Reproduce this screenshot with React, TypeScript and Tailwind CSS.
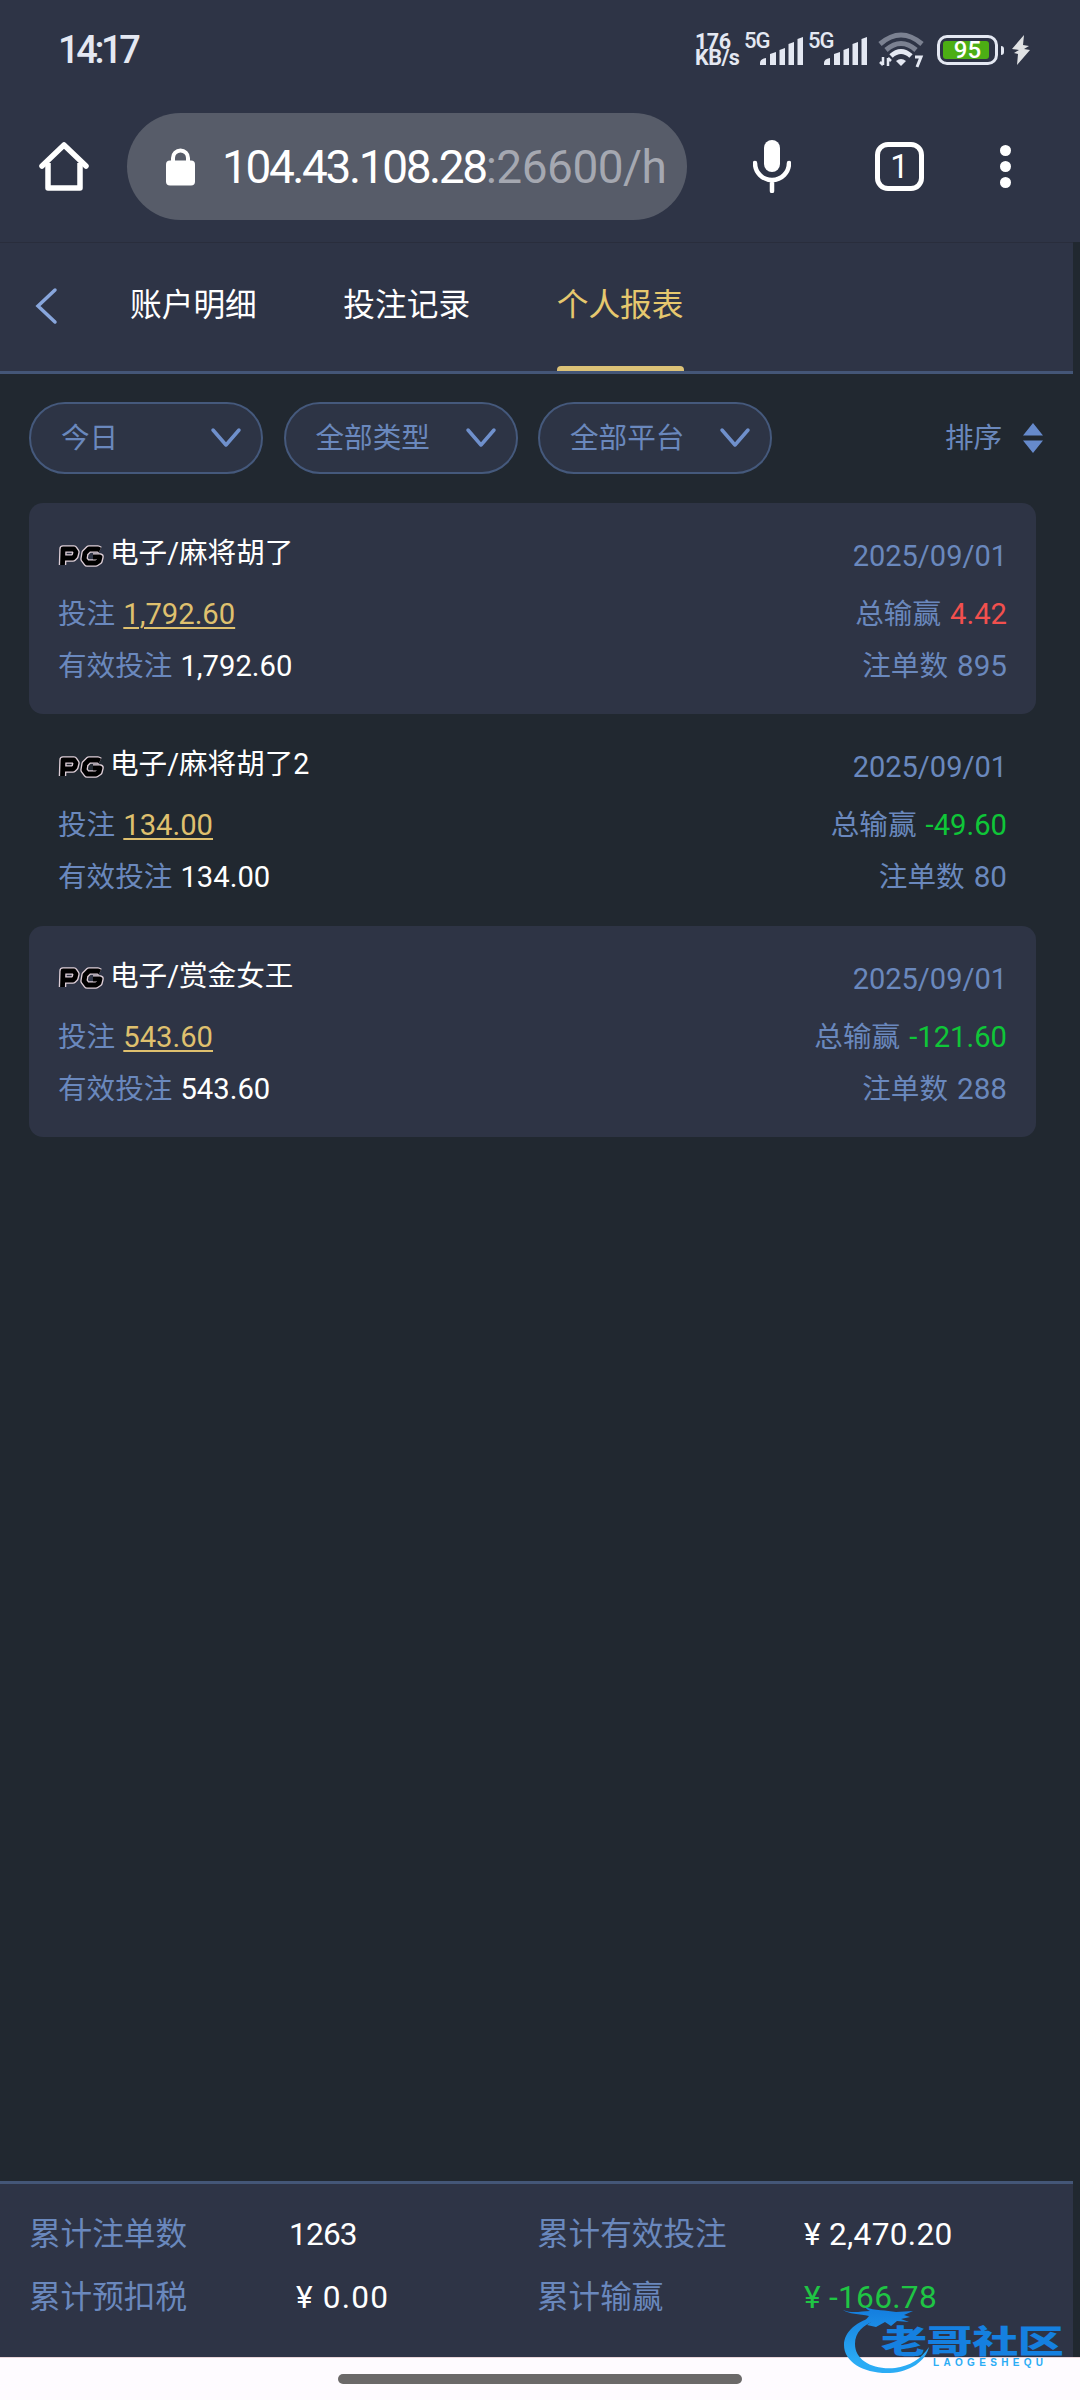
import clsx from "clsx";

const TABS = ["账户明细", "投注记录", "个人报表"];
const FILTERS = ["今日", "全部类型", "全部平台"];

const RECORDS = [
  { game: "电子/麻将胡了", bet: "1,792.60", valid: "1,792.60", win: "4.42", count: "895", date: "2025/09/01" },
  { game: "电子/麻将胡了2", bet: "134.00", valid: "134.00", win: "-49.60", count: "80", date: "2025/09/01" },
  { game: "电子/赏金女王", bet: "543.60", valid: "543.60", win: "-121.60", count: "288", date: "2025/09/01" },
];

const Signal = () => (
  <div className="relative h-[33px] w-[64px]">
    <span className="absolute -top-[4px] -left-[2px] text-[22px] leading-[22px] font-medium tracking-[-1px]">5G</span>
    <svg className="absolute left-[14px] top-[3px]" width="44" height="28" viewBox="0 0 44 28" fill="#e4e8f2">
      <path d="M0 28v-2q0-4 6-5v7zM10 28V17l6-2v13zM19.500 28V13l5.500-2v17zM28.500 28V7l5.500-2v23zM37.500 28V2l5.500-2v28z" />
    </svg>
  </div>
);

const StatusBar = () => (
  <div className="flex h-[100px] items-center pl-[58px] pr-[50px] text-[#e4e8f2]">
    <span className="text-[38px] font-medium tracking-[-3.400px]">14:17</span>
    <div className="ml-auto flex items-center">
      <div className="mr-[2px] w-[49px] text-[21.500px] leading-[16.500px] font-bold tracking-[-0.500px]">
        <div>176</div>
        <div>KB/s</div>
      </div>
      <Signal />
      <Signal />
      <svg className="ml-[4px]" width="46" height="36" viewBox="0 0 46 36" fill="none">
        <path d="M2 12Q23-6 44 12" stroke="#7b8191" strokeWidth="5" />
        <path d="M8 18Q23 5 38 18" stroke="#7b8191" strokeWidth="5" />
        <path d="M13 24Q23 15 33 24" stroke="#e4e8f2" strokeWidth="5" />
        <path d="M18 29q5-4 10 0l-5 5z" fill="#e4e8f2" />
        <path d="M5 25v8M5 33l-3-3M10 34v-8M10 26l3 3" stroke="#e4e8f2" strokeWidth="2.500" />
        <path d="M37 25h6l-4 10" stroke="#e4e8f2" strokeWidth="3" />
      </svg>
      <div className="ml-[13px] flex h-[30px] w-[61px] items-center rounded-[10px] border-[3px] border-[#e4e8f2] p-[3px]">
        <div className="flex h-full w-[46px] items-center justify-center rounded-[3px] bg-[#4cae14] pl-[3px] text-[24px] leading-none font-medium text-white">
          95
        </div>
      </div>
      <div className="ml-[3px] h-[9px] w-[3px] rounded-r-sm bg-[#e4e8f2]" />
      <svg className="ml-[8px]" width="18" height="30" viewBox="0 0 18 30" fill="#e0e2e4">
        <path d="M12 0 0 14l7 1-5 3 4 1-1 11L18 15l-6-1 5-3-6-1z" />
      </svg>
    </div>
  </div>
);

const BrowserBar = () => (
  <div className="flex h-[142px] items-start text-white">
    <svg className="ml-[39px] mt-[41px]" width="50" height="51" viewBox="0 0 50 51" fill="none" stroke="white" strokeWidth="5.500">
      <path d="M3 25 25 4l22 21" strokeLinecap="round" strokeLinejoin="round" />
      <path d="M9 22v25h32V22" strokeLinejoin="round" />
    </svg>
    <div className="ml-[38px] mt-[13px] flex h-[107px] w-[560px] items-center rounded-full bg-[#575c69] pl-[39px]">
      <svg width="29" height="38" viewBox="0 0 29 38">
        <path d="M7 15V10a7.500 7.500 0 0 1 15 0v5" fill="none" stroke="white" strokeWidth="4" />
        <rect y="12.500" width="29" height="25" rx="4" fill="white" />
      </svg>
      <div className="ml-[27px] whitespace-nowrap text-[46px] leading-none">
        <span className="tracking-[-2.400px]">104.43.108.28</span>
        <span className="tracking-[-0.500px] text-[#a5a8b1]">:26600/h</span>
      </div>
    </div>
    <svg className="ml-[66px] mt-[40px]" width="38" height="53" viewBox="0 0 38 53">
      <rect x="11" width="16" height="32" rx="8" fill="white" />
      <path d="M2 23c0 9 7 17 17 17s17-8 17-17M19 40v11" fill="none" stroke="white" strokeWidth="4.500" strokeLinecap="round" />
    </svg>
    <div className="ml-[84px] mt-[42px] flex size-[49px] items-center justify-center rounded-[13px] border-[5px] border-white text-[33px] leading-none">
      1
    </div>
    <div className="ml-[76px] mt-[45px] flex flex-col gap-[5px]">
      <span className="size-[11px] rounded-full bg-white" />
      <span className="size-[11px] rounded-full bg-white" />
      <span className="size-[11px] rounded-full bg-white" />
    </div>
  </div>
);

const PgLogo = () => (
  <svg className="mt-[2px]" width="47" height="25" viewBox="0 0 47 25" fill="none" strokeLinejoin="round">
    <g stroke="#dccdd6" strokeWidth="7.500">
      <path d="M4.500 21 5 5h11l2 3-1 4-2 2H7" />
      <path d="M42 6 40 5H31l-4 4-1 6 3 4h9l3-2 1-4h-7" />
    </g>
    <g stroke="#000" strokeWidth="4.800">
      <path d="M4.500 21 5 5h11l2 3-1 4-2 2H7" />
      <path d="M42 6 40 5H31l-4 4-1 6 3 4h9l3-2 1-4h-7" />
    </g>
  </svg>
);

const RecordCard = ({ record, striped }: { record: (typeof RECORDS)[number]; striped: boolean }) => (
  <div
    className={clsx(
      "flex h-[211.300px] justify-between rounded-[14px] px-[29px] text-[28.600px] text-[#6a88bd]",
      striped && "bg-[#2e3445]"
    )}
  >
    <div className="[word-spacing:1px]">
      <div className="mt-[27px] flex h-[50px] items-center text-white">
        <PgLogo />
        <span className="ml-[5px] -mt-[3px]">{record.game}</span>
      </div>
      <div className="mt-[8px] h-[52px] leading-[52px]">
        投注{" "}
        <span className="text-[29.200px] text-[#dfc06e] underline decoration-2 underline-offset-[3px]">{record.bet}</span>
      </div>
      <div className="h-[52px] leading-[52px]">
        有效投注 <span className="text-[29.200px] text-white">{record.valid}</span>
      </div>
    </div>
    <div className="text-right [word-spacing:2px]">
      <div className="mt-[28px] h-[50px] text-[29px] leading-[50px]">{record.date}</div>
      <div className="mt-[7px] h-[52px] leading-[52px]">
        总输赢{" "}
        <span className={clsx("text-[29.200px]", record.win.startsWith("-") ? "text-[#0fc638]" : "text-[#f2504e]")}>
          {record.win}
        </span>
      </div>
      <div className="h-[52px] leading-[52px]">
        注单数 <span className="text-[29.600px]">{record.count}</span>
      </div>
    </div>
  </div>
);

const Watermark = () => (
  <svg className="absolute left-[840px] top-[2305px]" width="226" height="72" viewBox="0 0 226 72">
    <defs>
      <linearGradient id="wm" x1="0" y1="0" x2="0" y2="72" gradientUnits="userSpaceOnUse">
        <stop offset="0.100" stopColor="#1580e0" />
        <stop offset="0.800" stopColor="#2bacf5" />
      </linearGradient>
    </defs>
    <g fill="url(#wm)">
      <path d="M36 12C17 15 4 27 4 40c0 17 20 29 46 28 20-1 36-12 39-26-8 12-19 19-34 21-23 2-40-8-40-24 0-12 8-19 21-24z" />
      <path d="M3 5c10 4 18 1 27 1-3-1-4-3-5-4 10 4 21 3 31 5l17-1-9 4 6 2-9 2 8 3-12-1-6 5-6-4-9 5-9-2 5-4-9 2 6-7C20 9 8 9 3 5z" />
      <g transform="translate(41 48) scale(1.440 1)">
        <text fontSize="32" fontWeight="900" fontFamily="'Noto Sans CJK SC', sans-serif" textLength="127" y="0">老哥社区</text>
      </g>
      <text x="93" y="61" fontSize="10" fontWeight="700" fontFamily="'Liberation Sans', sans-serif" textLength="110">LAOGESHEQU</text>
    </g>
  </svg>
);

export default function App() {
  return (
    <div className="relative flex h-[2400px] w-[1080px] flex-col overflow-hidden bg-[#212830] font-[Roboto,'Noto_Sans_CJK_SC',sans-serif]">
      <div className="bg-[#2e3446]">
        <StatusBar />
        <BrowserBar />
      </div>

      <div className="flex h-[132px] w-[1073px] items-center border-b-[3px] border-t border-b-[#445677] border-t-[#292d3c] bg-[#2e3446]">
        <svg className="ml-[35px] -mt-[2px]" width="24" height="38" viewBox="0 0 24 38" fill="none" stroke="#88a6dc" strokeWidth="3.500" strokeLinecap="round">
          <path d="M20 3 3 19l17 16" />
        </svg>
        <div className="ml-[71px] flex h-full gap-[86.600px] text-[31.700px]">
          {TABS.map((tab, i) => (
            <div
              key={tab}
              className={clsx("flex flex-col", i === TABS.length - 1 ? "text-[#e6c86e]" : "text-white")}
            >
              <div className="h-[123px] leading-[125px]">{tab}</div>
              {i === TABS.length - 1 && <div className="-mr-px h-[5px] rounded-t-[4px] bg-[#dcc277]" />}
            </div>
          ))}
        </div>
      </div>

      <div className="mt-[28px] flex items-center pl-[29px] text-[28.600px] text-[#6a88bd]">
        <div className="flex gap-[20.500px]">
          {FILTERS.map((filter) => (
            <div
              key={filter}
              className="flex h-[72px] w-[234px] items-center justify-between rounded-full border-2 border-[#45597c] bg-[#2d3445] pl-[30px] pr-[19px]"
            >
              <span>{filter}</span>
              <svg width="32" height="22" viewBox="0 0 32 22" fill="none" stroke="#6f90cc" strokeWidth="3.500" strokeLinecap="round" strokeLinejoin="round">
                <path d="m3 3 13 15L29 3" />
              </svg>
            </div>
          ))}
        </div>
        <span className="ml-[173px]">排序</span>
        <svg className="ml-[21px]" width="20" height="30" viewBox="0 0 20 30" fill="#668acb">
          <path d="M10 0 20 12.500H0zM10 30 0 17.500h20z" />
        </svg>
      </div>

      <div className="ml-[29px] mt-[29px] w-[1007px]">
        {RECORDS.map((record, i) => (
          <RecordCard key={record.game} record={record} striped={i % 2 === 0} />
        ))}
      </div>

      <div className="mt-auto grid h-[176px] w-[1073px] grid-cols-[260px_248px_267px_1fr] grid-rows-[63px_63px] content-start items-center border-t-[3px] border-[#445677] bg-[#2e3446] pl-[29px] pt-[19px] text-[31.600px] text-white">
        <span className="text-[#6a88bd]">累计注单数</span>
        <span className="tracking-[-0.800px]">1263</span>
        <span className="text-[#6a88bd]">累计有效投注</span>
        <span className="tracking-[0.300px]">¥ 2,470.20</span>
        <span className="text-[#6a88bd]">累计预扣税</span>
        <span className="pl-[7px] tracking-[1.200px]">¥ 0.00</span>
        <span className="text-[#6a88bd]">累计输赢</span>
        <span className="tracking-[0.300px] text-[#1fc544]">¥ -166.78</span>
      </div>

      <div className="flex h-[43px] justify-center border-t border-[#e9d5d9] bg-[#fefbff] pt-[16px]">
        <div className="h-[10px] w-[404px] rounded-full bg-[#6b6969]" />
      </div>

      <Watermark />
    </div>
  );
}
